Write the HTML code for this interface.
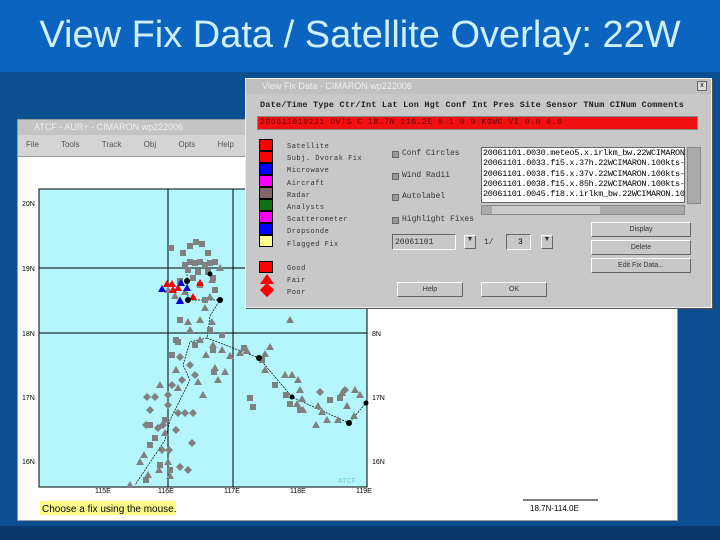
<!DOCTYPE html>
<html><head><style>
*{margin:0;padding:0;box-sizing:border-box}
body{width:720px;height:540px;overflow:hidden;background:#0b4f91;font-family:"Liberation Sans",sans-serif;position:relative}
.top{position:absolute;left:0;top:0;width:720px;height:72px;background:#0a64c0}
.top h1{font-weight:normal;color:#cfeffa;font-size:38px;text-align:center;line-height:70px;letter-spacing:0px}
.bot{position:absolute;left:0;top:526px;width:720px;height:14px;background:#08386c}
.abs{position:absolute}
.win{background:#fff;border:1px solid #999}
.tb{background:#c4c4c4;color:#f0f0f0;font-size:9px;line-height:14px;padding-left:16px;height:15px}
.dlg{background:#c8c8c8;border:1px solid #eee;box-shadow:1px 1px 0 #555}
.t{font-size:8px;color:#000;white-space:nowrap;position:absolute;font-family:"Liberation Mono",monospace}
.sw{position:absolute;width:14px;height:12px;border:1px solid #000}
.btn{position:absolute;border:1px solid #fff;border-right-color:#666;border-bottom-color:#666;background:#c8c8c8;font-size:7px;text-align:center;color:#333}
.cb{position:absolute;width:7px;height:7px;background:#999;border:1px solid #666}
</style></head><body>
<div class="top"><h1>View Fix Data / Satellite Overlay: 22W</h1></div>
<div class="bot"></div>

<div class="abs win" style="left:17px;top:119px;width:661px;height:402px">
 <div class="tb">ATCF - AUR+ - CIMARON wp222006</div>
 <div style="height:22px;background:#d4d4d4;border-bottom:1px solid #999;font-size:8px;color:#555;padding:5px 0 0 8px;word-spacing:20px">File Tools Track Obj Opts Help</div>
</div>

<svg class="abs" style="left:0;top:0" width="720" height="540">
<rect x="39" y="189" width="328" height="298" fill="#b4f6fc" stroke="#000" stroke-width="1"/>
<g stroke="#000" stroke-width="1">
<line x1="168" y1="189" x2="168" y2="487"/><line x1="233" y1="189" x2="233" y2="487"/>
<line x1="39" y1="268" x2="367" y2="268"/><line x1="39" y1="333" x2="367" y2="333"/>
</g>
<g font-size="7" fill="#000" font-family="Liberation Sans">
<text x="22" y="206">20N</text><text x="22" y="271">19N</text><text x="22" y="336">18N</text><text x="22" y="400">17N</text><text x="22" y="464">16N</text>
<text x="372" y="336">8N</text><text x="372" y="400">17N</text><text x="372" y="464">16N</text>
<text x="95" y="493">115E</text><text x="158" y="493">116E</text><text x="224" y="493">117E</text><text x="290" y="493">118E</text><text x="356" y="493">119E</text>
<text x="338" y="483" fill="#7cc">ATCF</text>
</g>
<rect x="40" y="501" width="136" height="14" fill="#fcfc8c"/>
<text x="42" y="512" font-size="10" font-family="Liberation Sans">Choose a fix using the mouse.</text>
<line x1="523" y1="500" x2="598" y2="500" stroke="#000"/>
<text x="530" y="511" font-size="8" font-family="Liberation Sans">18.7N-114.0E</text>
<g fill="none" stroke="#000" stroke-width="0.7" stroke-dasharray="2,1">
<polyline points="187,274 188,300 220,300 210,316 207,338 259,358 292,397 349,423 366,403"/>
<polyline points="207,338 190,342 183,365 190,380 170,420 165,440 145,470 135,485"/>
</g>
<g fill="#808080">
<path d="M168,245h6v6h-6zM187,243h6v6h-6zM193,239h6v6h-6zM199,241h6v6h-6zM182,262h6v6h-6zM187,259h6v6h-6zM192,260h6v6h-6zM197,259h6v6h-6zM202,262h6v6h-6zM207,260h6v6h-6zM212,259h6v6h-6zM185,267h6v6h-6zM195,269h6v6h-6zM205,269h6v6h-6zM177,278h6v6h-6zM197,282h6v6h-6zM212,287h6v6h-6zM202,297h6v6h-6zM177,317h6v6h-6zM173,337h6v6h-6zM169,352h6v6h-6zM175,339h6v6h-6zM207,327h6v6h-6zM192,342h6v6h-6zM210,347h6v6h-6zM219,332h6v6h-6zM211,369h6v6h-6zM162,417h6v6h-6zM147,422h6v6h-6zM152,435h6v6h-6zM143,477h6v6h-6zM157,462h6v6h-6zM167,467h6v6h-6zM147,442h6v6h-6zM247,395h6v6h-6zM250,404h6v6h-6zM287,401h6v6h-6zM283,392h6v6h-6zM327,397h6v6h-6zM337,395h6v6h-6zM297,407h6v6h-6zM272,382h6v6h-6zM241,345h6v6h-6zM259,357h6v6h-6zM180,250h6v6h-6zM205,250h6v6h-6zM190,275h6v6h-6zM210,275h6v6h-6z"/>
<path d="M168,286l-4,7h8zM175,292l-4,7h8zM180,296l-4,7h8zM185,288l-4,7h8zM210,293l-4,7h8zM220,264l-4,7h8zM212,276l-4,7h8zM205,304l-4,7h8zM200,316l-4,7h8zM188,318l-4,7h8zM190,326l-4,7h8zM212,318l-4,7h8zM200,336l-4,7h8zM213,341l-4,7h8zM206,351l-4,7h8zM215,364l-4,7h8zM225,368l-4,7h8zM230,352l-4,7h8zM222,346l-4,7h8zM240,349l-4,7h8zM247,347l-4,7h8zM265,350l-4,7h8zM270,343l-4,7h8zM265,366l-4,7h8zM285,371l-4,7h8zM292,371l-4,7h8zM298,376l-4,7h8zM300,386l-4,7h8zM302,395l-4,7h8zM297,400l-4,7h8zM303,406l-4,7h8zM318,402l-4,7h8zM322,408l-4,7h8zM327,416l-4,7h8zM316,421l-4,7h8zM342,389l-4,7h8zM355,386l-4,7h8zM360,391l-4,7h8zM347,402l-4,7h8zM354,412l-4,7h8zM338,416l-4,7h8zM144,451l-4,7h8zM140,458l-4,7h8zM148,471l-4,7h8zM159,466l-4,7h8zM168,458l-4,7h8zM170,472l-4,7h8zM130,481l-4,7h8zM165,429l-4,7h8zM178,384l-4,7h8zM160,381l-4,7h8zM176,366l-4,7h8zM198,378l-4,7h8zM203,391l-4,7h8zM218,376l-4,7h8zM290,316l-4,7h8zM283,238l-4,7h8z"/>
<path d="M147,393l4,4l-4,4l-4,-4zM155,393l4,4l-4,4l-4,-4zM168,391l4,4l-4,4l-4,-4zM172,381l4,4l-4,4l-4,-4zM182,376l4,4l-4,4l-4,-4zM195,371l4,4l-4,4l-4,-4zM190,361l4,4l-4,4l-4,-4zM180,353l4,4l-4,4l-4,-4zM178,409l4,4l-4,4l-4,-4zM185,409l4,4l-4,4l-4,-4zM193,409l4,4l-4,4l-4,-4zM192,439l4,4l-4,4l-4,-4zM180,463l4,4l-4,4l-4,-4zM188,466l4,4l-4,4l-4,-4zM168,401l4,4l-4,4l-4,-4zM163,421l4,4l-4,4l-4,-4zM176,426l4,4l-4,4l-4,-4zM169,446l4,4l-4,4l-4,-4zM320,388l4,4l-4,4l-4,-4zM345,386l4,4l-4,4l-4,-4zM150,406l4,4l-4,4l-4,-4zM146,421l4,4l-4,4l-4,-4zM158,424l4,4l-4,4l-4,-4zM162,446l4,4l-4,4l-4,-4z"/>
</g>
<path fill="#0000e0" d="M162,285l-4,7h8zM181,279l-4,7h8zM187,284l-4,7h8zM180,297l-4,7h8z"/>
<path fill="#f00000" d="M167,280l-4,7h8zM172,280l-4,7h8zM173,286l-4,7h8zM178,284l-4,7h8zM200,279l-4,7h8zM193,293l-4,7h8z"/>
<g fill="#000"><circle cx="187" cy="281" r="3"/><circle cx="188" cy="300" r="3"/><circle cx="220" cy="300" r="3"/><circle cx="259" cy="358" r="3"/><circle cx="292" cy="397" r="2.5"/><circle cx="349" cy="423" r="3"/><circle cx="366" cy="403" r="2.5"/><circle cx="210" cy="274" r="2.5"/></g>
</svg>

<div class="abs dlg" style="left:245px;top:78px;width:467px;height:230px">
 <div class="tb" style="background:#c0c0c0">View Fix Data - CIMARON wp222006</div>
 <div class="abs" style="right:4px;top:2px;width:10px;height:10px;background:#ddd;border:1px solid #666;font-size:7px;line-height:8px;text-align:center">x</div>
 <div class="t" style="left:14px;top:21px;font-size:8.5px;letter-spacing:0.2px;font-weight:bold;color:#222">Date/Time  Type Ctr/Int Lat  Lon   Hgt Conf Int Pres Site Sensor TNum CINum Comments</div>
 <div class="abs" style="left:11px;top:37px;width:441px;height:14px;background:#f01010;border:1px solid #888"></div>
 <div class="t" style="left:14px;top:39px;color:#600;letter-spacing:0.6px">200611010231 DVTS    C  18.7N 116.2E   0  1   0    0 KGWC   VI   0.0  0.0</div>
 <div class="sw" style="left:13px;top:60px;background:#f00"></div>
 <div class="sw" style="left:13px;top:72px;background:#f00"></div>
 <div class="sw" style="left:13px;top:84px;background:#00f"></div>
 <div class="sw" style="left:13px;top:96px;background:#f0f"></div>
 <div class="sw" style="left:13px;top:108px;background:#806868"></div>
 <div class="sw" style="left:13px;top:120px;background:#107010"></div>
 <div class="sw" style="left:13px;top:132px;background:#f0f"></div>
 <div class="sw" style="left:13px;top:144px;background:#00f"></div>
 <div class="sw" style="left:13px;top:156px;background:#ffff90"></div>
 <div class="sw" style="left:13px;top:182px;background:#f00"></div>
 <div class="abs" style="left:14px;top:195px;width:0;height:0;border-left:7px solid transparent;border-right:7px solid transparent;border-bottom:10px solid #f00"></div>
 <div class="abs" style="left:16px;top:206px;width:10px;height:10px;background:#f00;transform:rotate(45deg)"></div>
 <div class="t" style="left:41px;top:62px;line-height:12.2px;font-size:7px;color:#333;letter-spacing:0.5px">Satellite<br>Subj. Dvorak Fix<br>Microwave<br>Aircraft<br>Radar<br>Analysts<br>Scatterometer<br>Dropsonde<br>Flagged Fix<br><br>Good<br>Fair<br>Poor</div>
 <div class="cb" style="left:146px;top:72px"></div><div class="t" style="left:156px;top:70px;color:#333">Conf Circles</div>
 <div class="cb" style="left:146px;top:94px"></div><div class="t" style="left:156px;top:92px;color:#333">Wind Radii</div>
 <div class="cb" style="left:146px;top:115px"></div><div class="t" style="left:156px;top:113px;color:#333">Autolabel</div>
 <div class="cb" style="left:146px;top:138px"></div><div class="t" style="left:156px;top:136px;color:#333">Highlight Fixes</div>
 <div class="abs" style="left:146px;top:155px;width:64px;height:16px;border:1px solid #666;border-right-color:#fff;border-bottom-color:#fff"></div>
 <div class="t" style="left:149px;top:159px;color:#333">20061101</div>
 <div class="btn" style="left:218px;top:156px;width:12px;height:14px">▼</div>
 <div class="t" style="left:238px;top:159px;color:#333">1/</div>
 <div class="abs" style="left:260px;top:155px;width:25px;height:16px;border:1px solid #666;border-right-color:#fff;border-bottom-color:#fff"></div>
 <div class="t" style="left:272px;top:159px">3</div>
 <div class="btn" style="left:295px;top:156px;width:12px;height:14px">▼</div>
 <div class="abs" style="left:235px;top:68px;width:204px;height:56px;background:#fff;border:1px solid #666"></div>
 <div class="t" style="left:237px;top:69px;line-height:10.3px;font-size:8.5px;letter-spacing:-0.3px">20061101.0030.meteo5.x.irlkm_bw.22WCIMARON<br>20061101.0033.f15.x.37h.22WCIMARON.100kts-<br>20061101.0038.f15.x.37v.22WCIMARON.100kts-<br>20061101.0038.f15.x.85h.22WCIMARON.100kts-<br>20061101.0045.f18.x.irlkm_bw.22WCIMARON.10</div>
 <div class="abs" style="left:441px;top:68px;width:14px;height:57px;background:#aaa;border:1px solid #888"></div>
 <div class="abs" style="left:235px;top:126px;width:204px;height:10px;background:#aaa;border:1px solid #888"></div>
 <div class="abs" style="left:246px;top:127px;width:108px;height:8px;background:#ccc"></div>
 <div class="btn" style="left:345px;top:143px;width:100px;height:15px;line-height:13px">Display</div>
 <div class="btn" style="left:345px;top:161px;width:100px;height:15px;line-height:13px">Delete</div>
 <div class="btn" style="left:345px;top:179px;width:100px;height:15px;line-height:13px">Edit Fix Data...</div>
 <div class="btn" style="left:151px;top:203px;width:66px;height:15px;line-height:13px">Help</div>
 <div class="btn" style="left:235px;top:203px;width:66px;height:15px;line-height:13px">OK</div>
</div>
</body></html>
